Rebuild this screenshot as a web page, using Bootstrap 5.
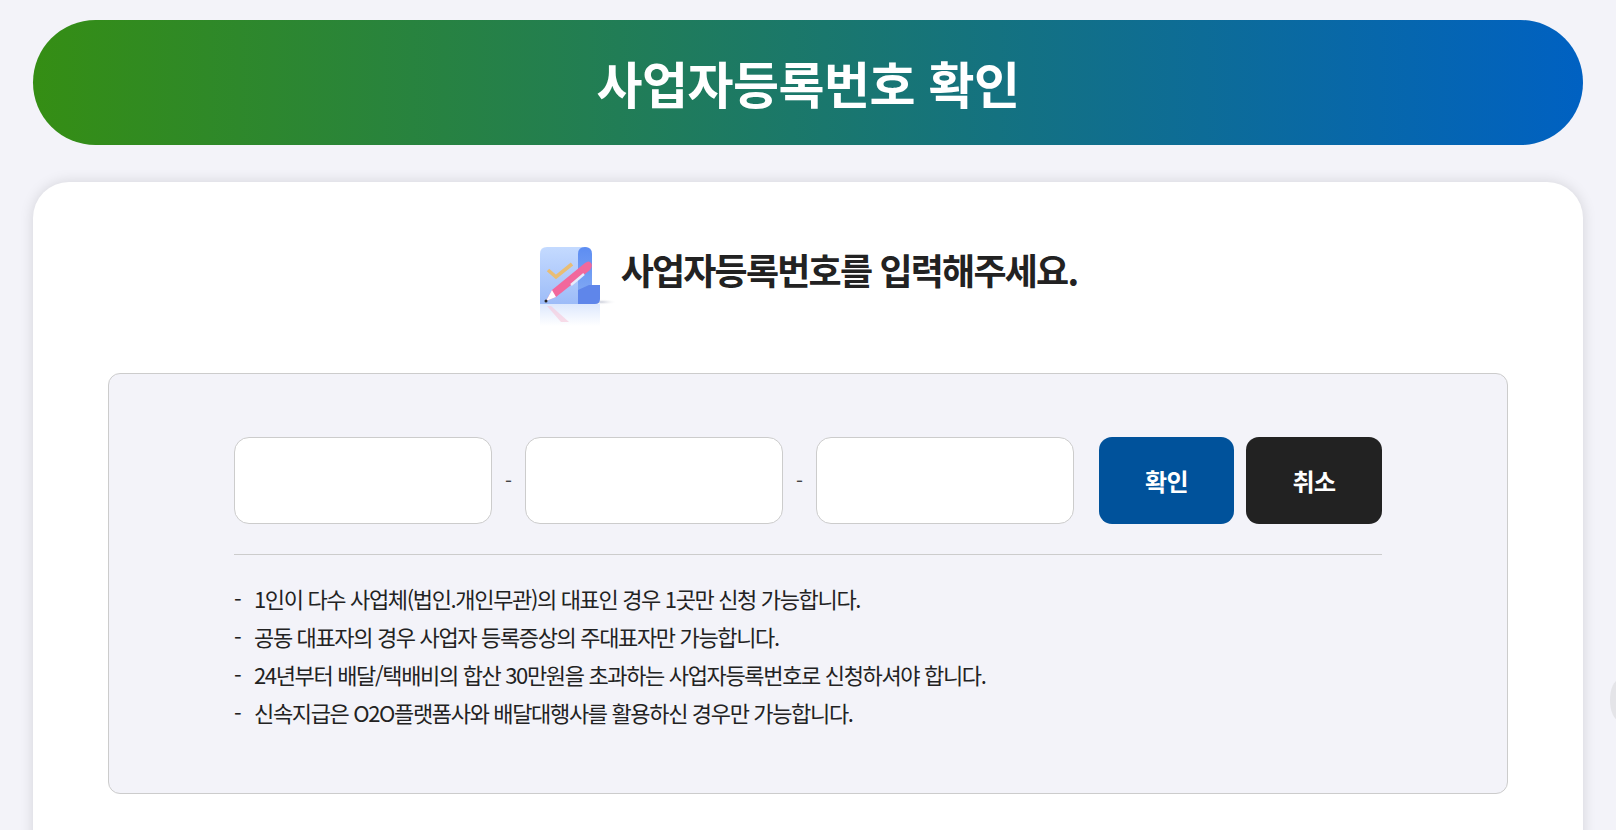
<!doctype html>
<html lang="ko"><head><meta charset="utf-8">
<link href="https://cdn.jsdelivr.net/npm/bootstrap@5.3.0/dist/css/bootstrap.min.css" rel="stylesheet">
<style>
html,body{height:830px;overflow:hidden}
body{background:#f3f3f9;font-family:"Noto Sans CJK KR","Noto Sans",sans-serif;color:#222}
.page-wrap{width:1550px;margin:0 auto;padding-top:20px}
.hero-bar{height:125px;border-radius:63px;background:linear-gradient(90deg,#358e14,#0061c2);color:#fff;font-size:50px;font-weight:700;letter-spacing:-.5px}
.main-panel{margin-top:37px;height:700px;background:#fff;border-radius:36px;box-shadow:0 0 14px rgba(0,0,0,.13);padding:69px 75px 0}
.sub-title{font-size:36px;font-weight:700;letter-spacing:-1.8px;color:#222;line-height:1;height:83px;padding-bottom:10px}
.form-box{height:421px;background:#f3f3f9;border:1px solid #ccc;border-radius:12px;margin-top:39px;padding:63px 125px 0}
.biz-input{width:258px;height:87px;border:1px solid #ccc;border-radius:15px;background:#fff;box-shadow:none}
.dash{width:33px;text-align:center;font-size:20px;color:#444}
.act-btn{height:87px;border:0;border-radius:13px;color:#fff;font-size:24px;font-weight:700;letter-spacing:-.5px;padding:0}
.act-ok{width:135px;background:#00529b;margin-left:25px}
.act-cancel{width:136px;background:#222;margin-left:12px}
.rule-line{border-top:1px solid #ccc;margin:30px 0 24px}
.note-list{font-size:22px;line-height:38px;letter-spacing:-1.35px;color:#222;font-weight:400;margin:0;padding:0;list-style:none}
.note-list span{display:inline-block;width:20px}
.edge-bump{position:absolute;right:-12px;top:680px;width:18px;height:40px;border-radius:50%;background:#e4e4e8}
</style></head><body>
<div class="page-wrap">
<header class="hero-bar d-flex align-items-center justify-content-center">사업자등록번호 확인</header>
<main class="main-panel">
<div class="sub-title d-flex align-items-start justify-content-center">
<svg width="78" height="86" viewBox="0 0 78 86" class="me-1" aria-hidden="true" style="margin-top:-5px">
<defs>
<linearGradient id="pg" x1="0" y1="0" x2="0" y2="1"><stop offset="0" stop-color="#c4daff"/><stop offset="1" stop-color="#9dbcf8"/></linearGradient>
<linearGradient id="rg" x1="0" y1="0" x2="0" y2="1"><stop offset="0" stop-color="#5d8df2"/><stop offset="1" stop-color="#88aef4"/></linearGradient>
<linearGradient id="fg" x1="0" y1="0" x2="0" y2="1"><stop offset="0" stop-color="#dde8fd"/><stop offset="1" stop-color="#fff"/></linearGradient>
<radialGradient id="sg"><stop offset="0" stop-color="#c9ccd8"/><stop offset="1" stop-color="#fff" stop-opacity="0"/></radialGradient>
</defs>
<ellipse cx="62" cy="56" rx="16" ry="3" fill="url(#sg)"/>
<path d="M1 57h60V7H8Q1 7 1 14Z" fill="url(#fg)" transform="translate(0 1) scale(1 1)" opacity="0"/>
<path d="M1 58h60v22H1Z" fill="url(#fg)"/>
<path d="M1 58V8q0-7 7-7h40v57Z" fill="url(#pg)"/>
<path d="M39 8q0-7 7-7 7 0 7 7v50H39Z" fill="url(#rg)"/>
<path d="M50 39h11v14q0 5-5 5H39V44Z" fill="#5f86ea"/>
<path d="M9 24l8 7 16-13" fill="none" stroke="#e9bd74" stroke-width="3.6"/>
<path d="M7 55l6-11L46 17q4-3 6 0t-1 7L17 51Z" fill="#f2689c"/>
<path d="M7 55l6-11 4 7Z" fill="#fff"/>
<path d="M32 39l13-11" stroke="#e7ecfb" stroke-width="2.4"/>
<circle cx="7" cy="55" r="1.5" fill="#222"/>
<path d="M12 60l18 16h-8L8 60Z" fill="#f6c6d8" opacity=".6"/>
</svg>
<span>사업자등록번호를 입력해주세요.</span>
</div>
<section class="form-box">
<div class="d-flex">
<input class="form-control biz-input" type="text" aria-label="사업자등록번호 앞자리">
<div class="dash d-flex align-items-center justify-content-center">-</div>
<input class="form-control biz-input" type="text" aria-label="사업자등록번호 가운데">
<div class="dash d-flex align-items-center justify-content-center">-</div>
<input class="form-control biz-input" type="text" aria-label="사업자등록번호 뒷자리">
<button class="btn act-btn act-ok" type="button">확인</button>
<button class="btn act-btn act-cancel" type="button">취소</button>
</div>
<div class="rule-line"></div>
<ul class="note-list">
<li><span>-</span>1인이 다수 사업체(법인.개인무관)의 대표인 경우 1곳만 신청 가능합니다.</li>
<li><span>-</span>공동 대표자의 경우 사업자 등록증상의 주대표자만 가능합니다.</li>
<li><span>-</span>24년부터 배달/택배비의 합산 30만원을 초과하는 사업자등록번호로 신청하셔야 합니다.</li>
<li><span>-</span>신속지급은 O2O플랫폼사와 배달대행사를 활용하신 경우만 가능합니다.</li>
</ul>
</section>
</main>
</div>
<div class="edge-bump"></div>
</body></html>
